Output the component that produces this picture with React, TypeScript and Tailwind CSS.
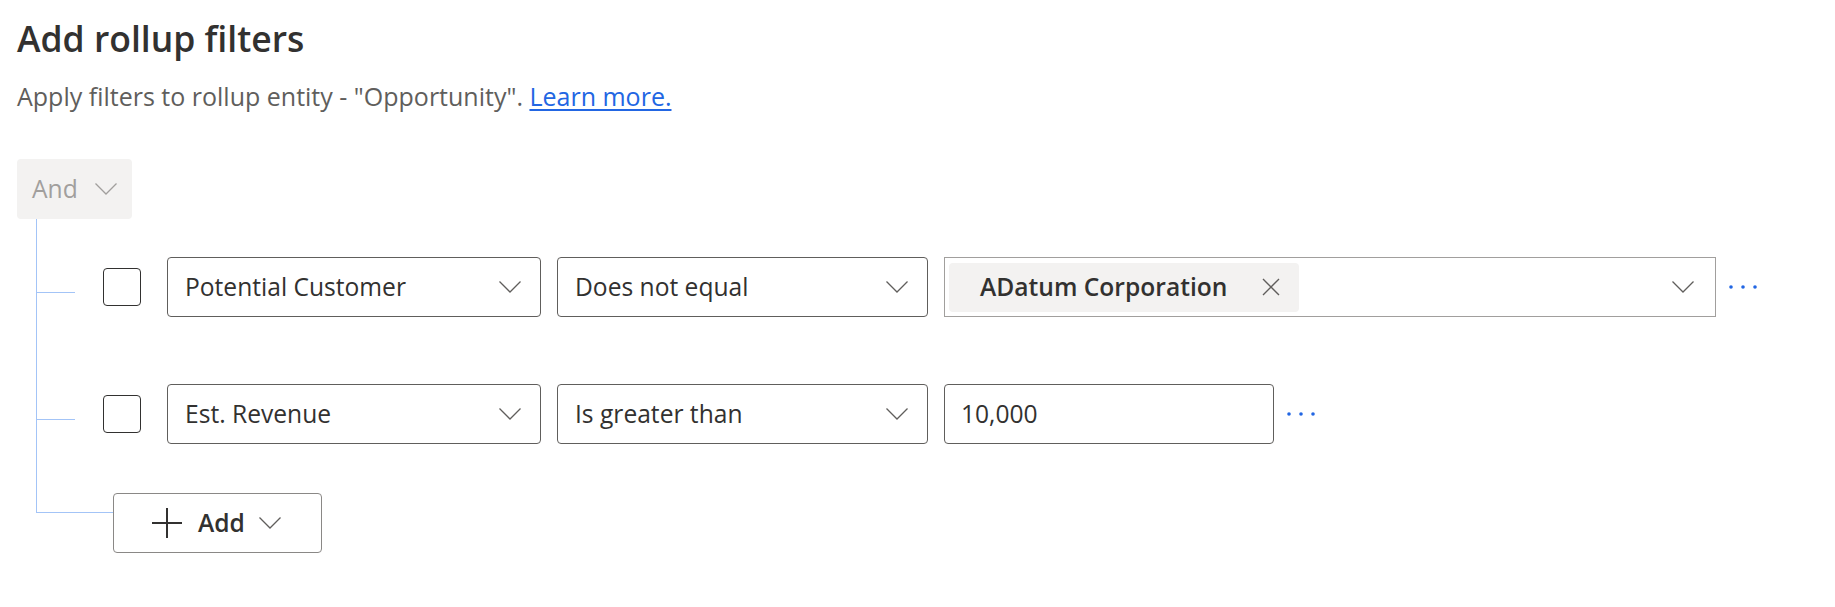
import React from "react";

const Chevron = ({ className = "" }: { className?: string }) => (
  <svg className={className} width="22" height="12" viewBox="0 0 22 12" fill="none">
    <path d="M0.5 0.5 L11 11 L21.5 0.5" stroke="currentColor" strokeWidth="1.3" />
  </svg>
);

const Dots = () => (
  <svg width="30" height="6" viewBox="0 0 30 6">
    <circle cx="3" cy="3" r="1.8" fill="#2266e3" />
    <circle cx="15" cy="3" r="1.8" fill="#2266e3" />
    <circle cx="27" cy="3" r="1.8" fill="#2266e3" />
  </svg>
);

const Select = ({ text, width }: { text: string; width: string }) => (
  <div
    className={`${width} h-[60px] shrink-0 rounded-[4px] border border-[#605e5c] flex items-center justify-between pl-[17px] pr-[19px] text-[#323130]`}
  >
    <span>{text}</span>
    <Chevron className="text-[#605e5c]" />
  </div>
);

const Checkbox = () => (
  <div className="w-[38px] h-[38px] mt-[11px] shrink-0 rounded-[4px] border border-[#323130] bg-white" />
);

const Branch = () => <div className="w-[38px] h-px mt-[35px] shrink-0 bg-[#a3c4f7]" />;

export default function App() {
  return (
    <div
      className="w-[1835px] h-[607px] bg-white pl-[17px] text-[24.6px] text-[#323130]"
      style={{ fontFamily: '"Segoe UI", "Open Sans", "Noto Sans", sans-serif' }}
    >
      <h1 className="pt-[14px] h-[64px] text-[35.5px] leading-[48px] font-semibold text-[#323130]">
        Add rollup filters
      </h1>
      <p className="mt-[14px] h-[36px] leading-[36px] text-[25px] text-[#605e5c]">
        Apply filters to rollup entity - "Opportunity".{" "}
        <a className="text-[#2266e3] underline underline-offset-[3px]" href="#">
          Learn more.
        </a>
      </p>
      <div className="mt-[45px] w-[115px] h-[60px] rounded-[4px] bg-[#f3f2f1] flex items-center pl-[15px] gap-[17px] text-[#a19f9d]">
        <span>And</span>
        <Chevron className="text-[#a19f9d]" />
      </div>
      <div className="ml-[19px]">
        <div className="border-l border-[#a3c4f7] pt-[38px] pb-[49px] flex flex-col gap-[67px]">
          <div className="flex items-start">
            <Branch />
            <div className="w-[28px] shrink-0" />
            <Checkbox />
            <div className="w-[26px] shrink-0" />
            <div className="flex items-center gap-[16px]">
              <Select text="Potential Customer" width="w-[374px]" />
              <Select text="Does not equal" width="w-[371px]" />
              <div className="w-[772px] h-[60px] border border-[#a19f9d] flex items-center justify-between pl-[4px] pr-[21px]">
                <div className="h-[49px] w-[350px] rounded-[4px] bg-[#f3f2f1] flex items-center justify-between pl-[31px] pr-[19px] font-semibold">
                  <span>ADatum Corporation</span>
                  <svg width="18" height="18" viewBox="0 0 18 18">
                    <path d="M1 1 L17 17 M17 1 L1 17" stroke="#605e5c" strokeWidth="1.4" />
                  </svg>
                </div>
                <Chevron className="text-[#605e5c]" />
              </div>
              <div className="ml-[-4px]">
                <Dots />
              </div>
            </div>
          </div>
          <div className="flex items-start">
            <Branch />
            <div className="w-[28px] shrink-0" />
            <Checkbox />
            <div className="w-[26px] shrink-0" />
            <div className="flex items-center gap-[16px]">
              <Select text="Est. Revenue" width="w-[374px]" />
              <Select text="Is greater than" width="w-[371px]" />
              <div className="w-[330px] h-[60px] rounded-[4px] border border-[#605e5c] flex items-center pl-[16px]">
                10,000
              </div>
              <div className="ml-[-4px]">
                <Dots />
              </div>
            </div>
          </div>
        </div>
        <div className="flex items-start">
          <div className="w-[77px] h-[20px] border-l border-b border-[#a3c4f7] shrink-0" />
          <div className="w-[209px] h-[60px] rounded-[4px] border border-[#8a8886] flex items-center pl-[38px] font-semibold">
            <svg width="30" height="30" viewBox="0 0 30 30">
              <path d="M15 0 V30 M0 15 H30" stroke="#323130" strokeWidth="2" />
            </svg>
            <span className="ml-[16px]">Add</span>
            <Chevron className="ml-[14px] text-[#605e5c]" />
          </div>
        </div>
      </div>
    </div>
  );
}
